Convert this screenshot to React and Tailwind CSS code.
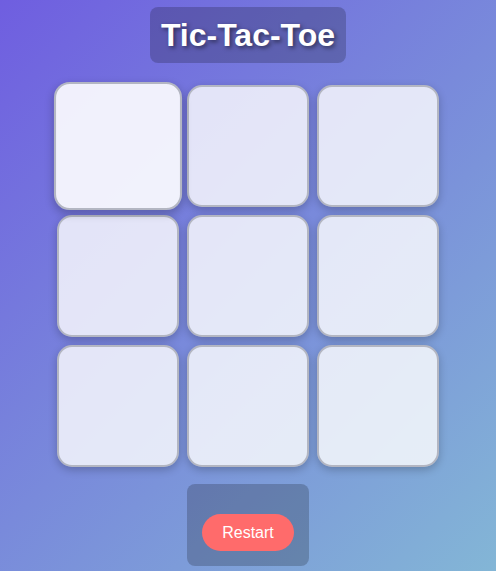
import React, { useState } from 'react';

// Simple tic-tac-toe board (empty state)
export default function App() {
  const [board, setBoard] = useState(Array(9).fill(null));

  const restart = () => setBoard(Array(9).fill(null));

  return (
    <div className="min-h-screen w-full flex flex-col items-center bg-[linear-gradient(135deg,#6f5ee0,#83b6d6)] font-['Liberation_Sans',Arial,sans-serif]">
      <h1 className="mt-[7px] px-[11px] py-[10px] rounded-lg bg-black/20 text-white text-[32px] leading-[36px] font-bold [text-shadow:2px_2px_4px_rgba(0,0,0,0.5)]">
        Tic-Tac-Toe
      </h1>

      <div className="mt-[22px] grid grid-cols-[repeat(3,122px)] gap-2">
        {board.map((cell, i) => (
          <button
            key={i}
            onClick={() => {
              const next = [...board];
              next[i] = 'X';
              setBoard(next);
            }}
            className={`w-[122px] h-[122px] rounded-[15px] border-2 border-[#b3b6c2] shadow-[0_3px_8px_rgba(0,0,0,0.22)] ${
              i === 0 ? 'scale-105 bg-white/90' : 'bg-white/80'
            }`}
          >
            {cell}
          </button>
        ))}
      </div>

      <div className="mt-[17px] p-[15px] rounded-lg bg-black/20">
        <button
          onClick={restart}
          className="mt-[15px] px-5 h-[37px] rounded-full bg-[#ff6b6b] text-white text-base"
        >
          Restart
        </button>
      </div>
    </div>
  );
}
